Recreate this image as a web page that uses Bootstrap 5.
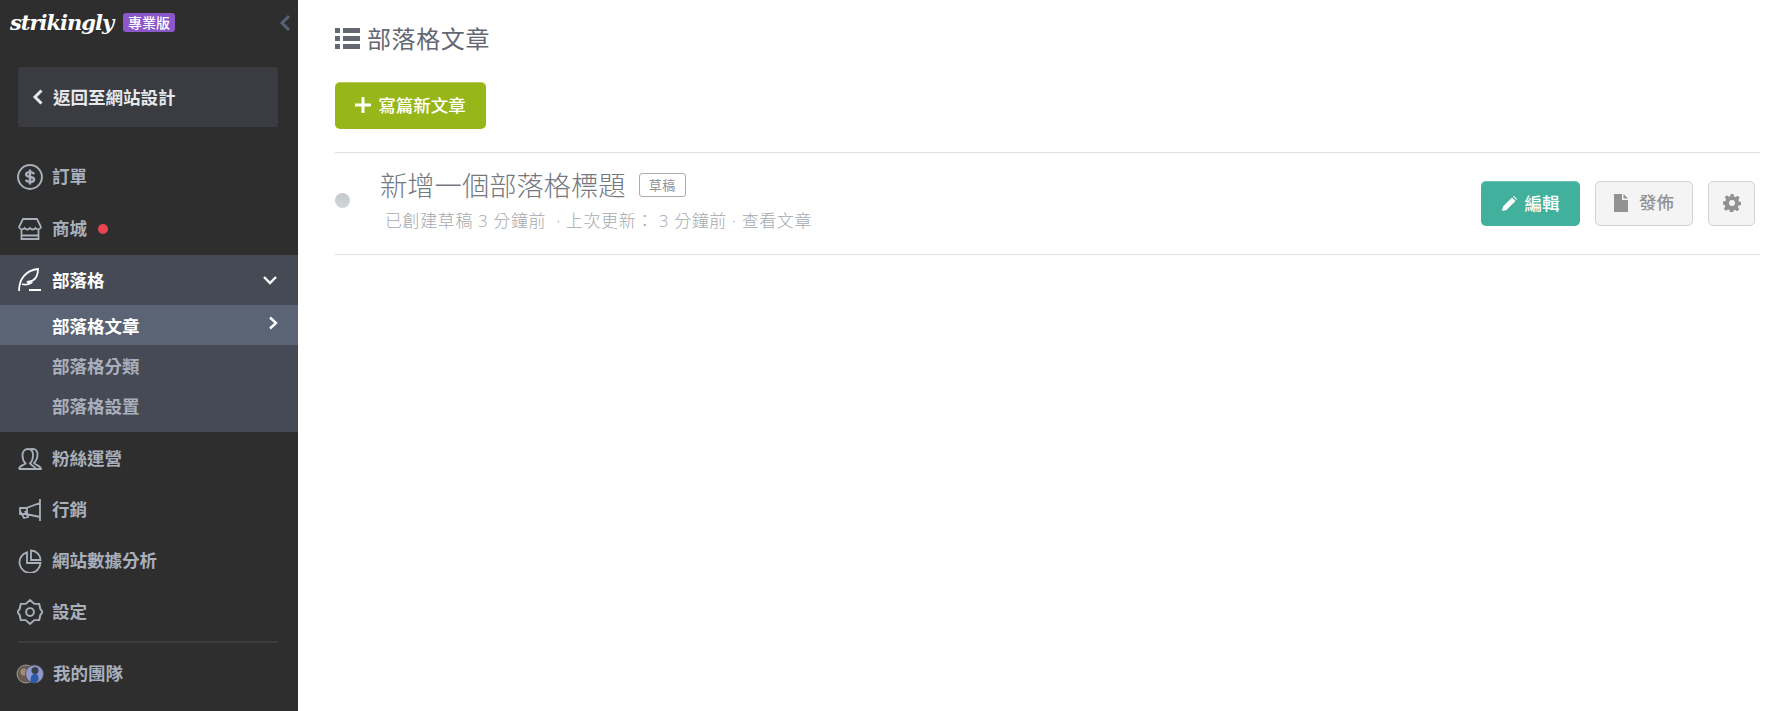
<!DOCTYPE html>
<html lang="zh-Hant">
<head>
    <meta charset="UTF-8">
    <title>部落格文章</title>
    <link href="https://cdn.jsdelivr.net/npm/bootstrap@5.3.0/dist/css/bootstrap.min.css" rel="stylesheet">
    <style>
        html, body { height: 100%; overflow: hidden; }
        body { font-family: "Open Sans", "Noto Sans CJK TC", sans-serif; background: #fff; }
        .app-shell { height: 711px; }
        .side-panel { width: 298px; flex: none; background: #2e2e2e; color: #a9b0bc; font-weight: 700; font-size: 17.5px; }
        .logo-row { height: 67px; padding: 6px 7px 0 10px; }
        .logo-text { font-family: "DejaVu Serif", serif; font-style: italic; font-weight: 700; font-size: 21px; letter-spacing: -1px; color: #fff; line-height: 34px; width: 105px; }
        .pro-tag { background: #8b57c9; color: #fff; font-size: 14px; font-weight: 500; line-height: 19px; border-radius: 3px; padding: 0 5px; margin-top: 7px; }
        .back-btn { height: 60px; margin: 0 20px 0 18px; padding-left: 13px; background: #3a3c42; border-radius: 3px; color: #e6e8eb; }
        .menu-wrap { margin-top: 24px; }
        .menu-row { height: 51px; padding-left: 18px; gap: 10px; }
        .shop-row { margin-top: 1px; }
        .menu-icon { width: 24px; height: 24px; flex: none; fill: none; stroke: #a9b0bc; stroke-width: 1.8; }
        .icon-big { width: 26px; height: 26px; margin: 0 -1px; }
        .red-dot { width: 10px; height: 10px; background: #ea4450; border-radius: 50%; margin-left: 1px; }
        .blog-group { background: #464a54; padding-bottom: 7px; margin-top: 1px; }
        .blog-head { height: 50px; padding: 0 20px 0 18px; gap: 10px; color: #fff; }
        .blog-head .menu-icon { stroke: #fff; }
        .sub-row { height: 40px; padding: 3px 20px 0 52px; }
        .sub-on { background: #5b6475; color: #fff; }
        .after-blog { margin-top: 1px; }
        .menu-rule { height: 2px; background: #3a3c42; margin: 4px 20px 5px 18px; }
        .team-pics { width: 28px; height: 24px; margin-left: -2px; flex: none; margin-right: -1px; }
        .main-pane { padding: 20px 0 0 37px; width: 1462px; }
        .page-title { font-size: 24px; font-weight: 400; color: #636873; letter-spacing: .6px; line-height: 36px; gap: 7px; margin: 0 0 26px 0; font-family: "Noto Sans CJK TC", sans-serif; }
        .add-post { height: 47px; width: 151px; background: #97b619; border: 0; border-top: 1px solid #b7cd5c; border-radius: 5px; color: #fff; font-weight: 500; font-size: 17.5px; gap: 7px; padding: 0 0 2px; }
        .add-post:hover { background: #8aa716; color: #fff; }
        .post-row { height: 103px; margin-top: 23px; border-top: 1px solid #e0e0e0; border-bottom: 1px solid #e0e0e0; padding-right: 5px; font-family: "Noto Sans CJK TC", sans-serif; }
        .state-dot { width: 15px; height: 15px; border-radius: 50%; background: linear-gradient(#c4c9cb, #d0d5d6); margin-right: 30px; margin-top: -6px; flex: none; }
        .post-text { margin-top: -7px; }
        .post-name { font-size: 27.3px; font-weight: 300; color: #74787f; line-height: 36px; }
        .draft-tag { font-size: 13px; color: #8f939a; border: 1px solid #a9adb2; border-radius: 3px; line-height: 22px; padding: 0 9px; letter-spacing: 0.5px; margin-left: 13px; margin-top: 1px; font-weight: 400; }
        .post-meta { font-family: "Open Sans", "Noto Sans CJK TC", sans-serif; font-size: 17px; font-weight: 300; color: #a5a9ae; letter-spacing: .6px; line-height: 26px; padding-left: 5px; margin-top: 6px; white-space: nowrap; }
        .row-btn { height: 45px; border-radius: 5px; font-size: 17.5px; padding: 0 0 2px; gap: 8px; margin-left: 15px; }
        .edit-btn { width: 99px; background: #41b19e; border: 0; border-top: 1px solid #67c3b3; color: #fff; font-weight: 500; }
        .edit-btn:hover { background: #399e8d; color: #fff; }
        .plain-btn { background: #f4f4f4; border: 1px solid #d2d2d2; color: #929292; font-weight: 500; }
        .plain-btn:hover { background: #ececec; color: #929292; }
        .publish-btn { width: 98px; gap: 11px; }
        .gear-btn { width: 47px; }
    </style>
</head>
<body>
<div class="app-shell d-flex">
    <!-- Sidebar -->
    <nav class="side-panel">
        <div class="logo-row d-flex align-items-start">
            <span class="logo-text">strikingly</span>
            <span class="pro-tag ms-2">專業版</span>
            <svg class="ms-auto mt-2" width="12" height="18" viewBox="0 0 12 18"><path d="M10 2 3 9l7 7" fill="none" stroke="#566175" stroke-width="3"/></svg>
        </div>
        <div class="back-btn d-flex align-items-center">
            <svg class="me-2" width="14" height="18" viewBox="0 0 14 18"><path d="M10.500 2.500 4 9l6.500 6.500" fill="none" stroke="#e6e8eb" stroke-width="3"/></svg>
            <span>返回至網站設計</span>
        </div>
        <div class="menu-wrap">
            <div class="menu-row d-flex align-items-center">
                <svg class="menu-icon icon-big" viewBox="0 0 24 24"><circle cx="12" cy="12" r="11"/><path stroke-width="2.2" d="M15.800 9.300c-.6-1.100-2-1.800-3.800-1.800-2.200 0-3.600.9-3.600 2.300 0 3.200 7.400 1.200 7.400 4.400 0 1.400-1.600 2.300-3.800 2.300-1.700 0-3.100-.6-4-1.700M12 5v14"/></svg>
                <span>訂單</span>
            </div>
            <div class="menu-row shop-row d-flex align-items-center">
                <svg class="menu-icon" viewBox="0 0 24 24"><path d="M5 2h14l4 8c-1 3-4 3-5.500 1-1.500 2-4 2-5.500 0-1.500 2-4 2-5.500 0C5 13 2 13 1 10zM3.500 12.500V22h17v-9.500M3.500 18.500h17"/></svg>
                <span>商城</span>
                <span class="red-dot"></span>
            </div>
            <div class="blog-group">
                <div class="blog-head d-flex align-items-center">
                    <svg class="menu-icon" viewBox="0 0 24 24"><path d="M1 23C1 11 8 2 20 1c0 6-2 10-6 12l-5 1 4 1c-3 2-6 2-9 1M11 22h12"/></svg>
                    <span>部落格</span>
                    <svg class="ms-auto" width="16" height="10" viewBox="0 0 16 10"><path d="M2 2l6 6 6-6" fill="none" stroke="#fff" stroke-width="2.400"/></svg>
                </div>
                <div class="sub-row sub-on d-flex align-items-center justify-content-between">
                    <span>部落格文章</span>
                    <svg class="mb-2" width="10" height="14" viewBox="0 0 10 14"><path d="M2 1.500 8 7l-6 5.500" fill="none" stroke="#fff" stroke-width="2.400"/></svg>
                </div>
                <div class="sub-row d-flex align-items-center">部落格分類</div>
                <div class="sub-row d-flex align-items-center">部落格設置</div>
            </div>
            <div class="menu-row d-flex align-items-center after-blog">
                <svg class="menu-icon" viewBox="0 0 24 24"><path d="M1 22h22c0-3-5-3.500-7-6 2-2 3.500-5 3.500-8.500C19.500 4 17.500 2 15 2c-1.200 0-2.200.4-3 1.200M1 22c0-3 4-3.500 6.500-5.500-2-2-3-5-3-8C4.500 4.500 6.500 2 10 2s5 2.500 5 6c0 3-1 6.500-3 8.500 1.500 2 5 3 6 5.500"/></svg>
                <span>粉絲運營</span>
            </div>
            <div class="menu-row d-flex align-items-center">
                <svg class="menu-icon" viewBox="0 0 24 24"><path d="M22 1v22M22 5 8 10H2v6h6l14 3M2 10v3l4 7 4-1-3-6M9 10v6"/></svg>
                <span>行銷</span>
            </div>
            <div class="menu-row d-flex align-items-center">
                <svg class="menu-icon" viewBox="0 0 24 24"><path d="M9 3.300A10.500 10.500 0 1 0 22.500 14H9z"/><path d="M13 1.500a9.500 9.500 0 0 1 9.500 9.500H13z"/></svg>
                <span>網站數據分析</span>
            </div>
            <div class="menu-row d-flex align-items-center">
                <svg class="menu-icon icon-big" viewBox="0 0 24 24"><path d="M12 1l4 3.500h4.500l1 4.500 2 3-2 3-1 4.500H16L12 23l-4-3.500H3.500l-1-4.500-2-3 2-3 1-4.500H8z"/><circle cx="12" cy="12" r="3.600"/></svg>
                <span>設定</span>
            </div>
            <div class="menu-rule"></div>
            <div class="menu-row d-flex align-items-center">
                <svg class="team-pics" viewBox="0 0 28 24">
                    <circle cx="10" cy="12" r="9" fill="#6a5a50" stroke="#9a9a9a"/>
                    <circle cx="8" cy="10" r="3.500" fill="#a08a78"/>
                    <circle cx="18.500" cy="12" r="9" fill="#8f98cf" stroke="#555"/>
                    <path d="M14.500 20c0-6 1.500-8 4.500-8s3.500 2 3.500 6c-2 3-6 4-8 2z" fill="#2b5aa8"/>
                    <circle cx="19" cy="8.500" r="3.500" fill="#3a3f4a"/>
                </svg>
                <span>我的團隊</span>
            </div>
        </div>
    </nav>

    <!-- Main -->
    <main class="main-pane">
        <h1 class="page-title d-flex align-items-center">
            <svg width="25" height="21" viewBox="0 0 25 21" fill="#636873"><rect width="5" height="5"/><rect y="8" width="5" height="5"/><rect y="16" width="5" height="5"/><rect x="8" width="17" height="5"/><rect x="8" y="8" width="17" height="5"/><rect x="8" y="16" width="17" height="5"/></svg>
            <span>部落格文章</span>
        </h1>
        <button type="button" class="btn add-post d-flex align-items-center justify-content-center">
            <svg width="16" height="16" viewBox="0 0 16 16"><path d="M6.500 0h3v6.500H16v3H9.500V16h-3V9.500H0v-3h6.500z" fill="#fff"/></svg>
            <span>寫篇新文章</span>
        </button>
        <div class="post-row d-flex align-items-center">
            <span class="state-dot"></span>
            <div class="post-text flex-grow-1">
                <div class="d-flex align-items-center">
                    <span class="post-name">新增一個部落格標題</span>
                    <span class="draft-tag">草稿</span>
                </div>
                <div class="post-meta">已創建草稿 3 分鐘前 &nbsp;· 上次更新： 3 分鐘前 · 查看文章</div>
            </div>
            <button type="button" class="btn row-btn edit-btn d-flex align-items-center justify-content-center">
                <svg width="15" height="15" viewBox="0 0 15 15"><path d="M0 15l1-4.500L10 1.500l3.500 3.500-9 9z M11 .5l1-.5 3 3-.5 1z" fill="#fff"/></svg>
                <span>編輯</span>
            </button>
            <button type="button" class="btn row-btn plain-btn publish-btn d-flex align-items-center justify-content-center">
                <svg width="14" height="18" viewBox="0 0 14 18"><path d="M0 0h8v6h6v12H0zM9.500 0 14 4.500H9.500z" fill="#929292"/></svg>
                <span>發佈</span>
            </button>
            <button type="button" class="btn row-btn plain-btn gear-btn d-flex align-items-center justify-content-center" aria-label="設定">
                <svg width="18" height="18" viewBox="0 0 18 18"><path fill="#929292" fill-rule="evenodd" d="M7.500 0h3l.5 2.500 1.500.6L14.700 1.700l2 2.100-1.400 2.100.6 1.500 2.100.6v3l-2.500.5-.6 1.500 1.400 2.200-2.100 2-2.100-1.400-1.500.6-.6 2.100h-3l-.5-2.500-1.500-.6-2.200 1.400-2-2.100 1.400-2.100-.6-1.500L0 10.500v-3l2.500-.5.6-1.500L1.700 3.300l2.100-2 2.100 1.400 1.500-.6zM9 6a3 3 0 1 0 0 6 3 3 0 0 0 0-6z"/></svg>
            </button>
        </div>
    </main>
</div>
<script src="https://cdn.jsdelivr.net/npm/bootstrap@5.3.0/dist/js/bootstrap.bundle.min.js"></script>
</body>
</html>
